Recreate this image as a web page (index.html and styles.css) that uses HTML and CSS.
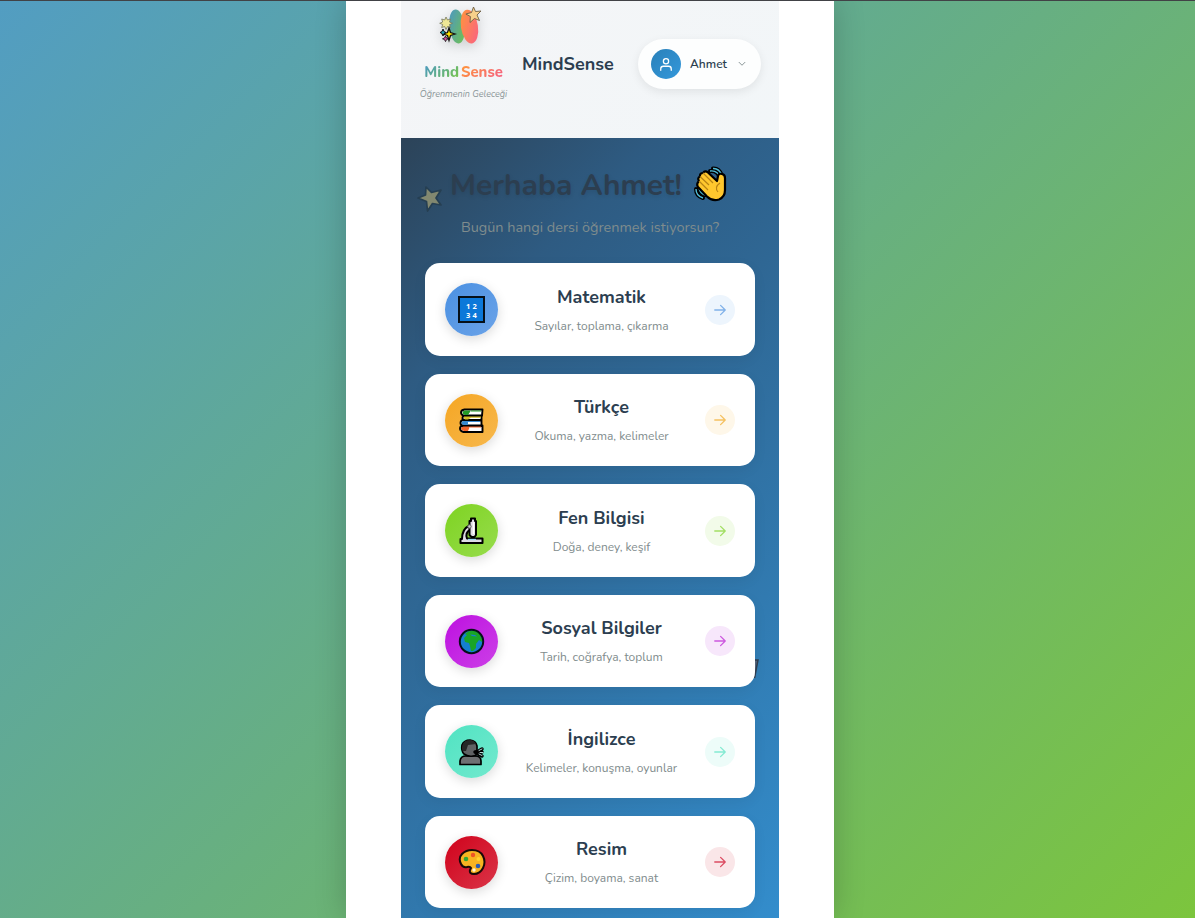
FILE: index.html
```html
<!DOCTYPE html>
<html lang="tr">
<head>
<meta charset="utf-8">
<title>MindSense</title>
<link rel="stylesheet" href="styles.css">
</head>
<body>
<svg class="defs" width="0" height="0">
  <defs>
    <symbol id="arrow" viewBox="0 0 24 24"><path d="M3 12h18M13 4l8 8-8 8"/></symbol>
  </defs>
</svg>
<div class="shell">
<div class="app">
  <header class="header">
    <div class="brand">
      <div class="mark">
        <svg width="56" height="46" viewBox="0 0 56 46">
          <defs>
            <linearGradient id="left" x1="0" y1="0" x2="1" y2="1"><stop offset="0" stop-color="#4b96c8"/><stop offset="1" stop-color="#72c44a"/></linearGradient>
            <linearGradient id="right" x1="0" y1="0" x2="1" y2="1"><stop offset="0" stop-color="#ff9838"/><stop offset="1" stop-color="#f95e87"/></linearGradient>
          </defs>
          <ellipse cx="25" cy="25.500" rx="7.800" ry="17" fill="url(#left)" transform="rotate(-6 25 26)"/>
          <ellipse cx="37.500" cy="25.500" rx="8.500" ry="17" fill="url(#right)" transform="rotate(-9 38 26)"/>
          <path d="M14 16l1.500 3 3-1-1 3 3 1.300-3 1.200 1 3-3-1-1.500 3-1.300-3-3 1 1-3-3-1.200 3-1.300-1-3 3 1z" fill="#eee795" stroke="#74765d" stroke-width=".8"/>
          <path d="M17 27l1.500 4.500 4.500 1.500-4.500 1.500-1.500 5-1.500-5-4.500-1.500 4.500-1.500z" fill="#ffe500" stroke="#111" stroke-width="1.300"/>
          <path d="M11 28l1 2.500 2 1-2 1-1 2.500-1-2.500-2-1 2-1z" fill="#24a7b8" stroke="#111"/>
          <path d="M13.500 35l1 2 2 .8-2 .8-1 2-1-2-2-.8 2-.8z" fill="#d94a9d" stroke="#111" stroke-width=".8"/>
          <path d="M41.500 6l2 4.500 5.500-.5-4 4 2.500 5.500-5-2-4.500 4 .4-6-4.500-2.500 5.600-1.500z" fill="#f7d08a" stroke="#6c5e43" stroke-width=".9"/>
        </svg>
      </div>
      <div class="wordmark"><span class="mind">Mind</span><span class="sense">Sense</span></div>
      <div class="tagline">Öğrenmenin Geleceği</div>
    </div>
    <h1 class="title">MindSense</h1>
    <div class="user">
      <span class="avatar"><svg width="14" height="15" viewBox="0 0 24 24"><circle cx="12" cy="6.500" r="4.500"/><path d="M3 22v-2.500a4.500 4.500 0 0 1 4.500-4.500h9a4.500 4.500 0 0 1 4.500 4.500V22"/></svg></span>
      <span class="name">Ahmet</span>
      <svg class="chevron" width="10" height="10" viewBox="0 0 24 24"><path d="M5 8l7 7 7-7"/></svg>
    </div>
  </header>
  <main class="main">
    <svg class="float-star" width="28" height="28" viewBox="0 0 28 28"><path d="M10 2l5.500 5.500L25 5l-5 8 5 7-8.500-1.500L11.500 26l-1-9.500L2 13l7.500-3z"/></svg>
    <svg class="float-flag" width="10" height="22" viewBox="0 0 10 22"><path d="M1 1h7L4.500 19"/></svg>
    <div class="greeting">
      <h2 class="hello">Merhaba Ahmet!</h2>
      <svg class="wave" width="34" height="36" viewBox="0 0 34 36">
        <path class="wave-outline" d="M16 4q8-1 10 7M19 1.500q6-.5 9 7M2 22q0 7 7 9M5 21q1 5 6 7"/>
        <path class="wave-line" d="M16 4q8-1 10 7M19 1.500q6-.5 9 7M2 22q0 7 7 9M5 21q1 5 6 7"/>
        <path d="M5 14q-2-3 1-4.500-.5-3.500 3-3.500 2-3 5-.5l9 8.500 1-5q.5-3 4-2 3 .5 3 4v12q0 7-6 9.500-7 2-12-3L4 20q-2-3 1-6z" fill="#ffc72e" stroke="#000" stroke-width="2.200" stroke-linejoin="round"/>
        <path d="M6 9.500l9 8.500M9 6l10 10M5 14l9 9M26 16q-6 4-2 9" fill="none" stroke="#b78315" stroke-width="1.200"/>
      </svg>
    </div>
    <p class="question">Bugün hangi dersi öğrenmek istiyorsun?</p>
    <div class="cards">
      <div class="card math">
        <span class="icon"><svg width="27" height="27" viewBox="0 0 27 27"><rect x="1" y="1" width="25" height="25" fill="#0c78d9" stroke="#061019" stroke-width="2"/><text class="digits" x="8" y="12.500">1</text><text class="digits" x="14.500" y="12.500">2</text><text class="digits" x="8" y="21.500">3</text><text class="digits" x="14.500" y="21.500">4</text></svg></span>
        <div class="text"><h3>Matematik</h3><p>Sayılar, toplama, çıkarma</p></div>
        <span class="go"><svg width="14" height="14"><use href="#arrow"/></svg></span>
      </div>
      <div class="card turkish">
        <span class="icon"><svg width="27" height="27" viewBox="0 0 27 27" stroke="#000" stroke-width="1.900" stroke-linejoin="round">
          <path d="M24.500 2.500H6.500Q3 3 3 5.500T6.500 9h17.500zM23.500 8.500H7q-2.500.5-2.500 2.500T7 13.500h16.500zM23.500 13H5Q2.500 13.500 2.500 16T5.500 19h18zM24.500 18.500H5q-3 .5-3 3t3.500 3.500h19z" fill="#fff"/>
          <path d="M13 3.500H7Q4.500 4 4.500 5.500T7 8h3zM12 3.500h11v1H12z" fill="#239b27" stroke="none"/><path d="M6 9.500h17v1.200H13L10 12.500H7q-2-1.500-1-3z" fill="#d5bd27" stroke="none"/><path d="M10 14H5.500q-2 .5-2 2T6 18h4zM10 14h12v1H10z" fill="#3989d0" stroke="none"/><path d="M12 19.500H5.500q-2.500.5-2.500 2T6 24h4zM12 19.500h11v1H11z" fill="#f2652d" stroke="none"/>
        </svg></span>
        <div class="text"><h3>Türkçe</h3><p>Okuma, yazma, kelimeler</p></div>
        <span class="go"><svg width="14" height="14"><use href="#arrow"/></svg></span>
      </div>
      <div class="card science">
        <span class="icon"><svg width="27" height="28" viewBox="0 0 27 28" stroke="#000" stroke-width="2" stroke-linejoin="round">
          <path d="M11.500 8.500Q4 12 4 22H2.500v4h22v-4.500H9q-2-6 3-8.500z" fill="#dedce5"/><path d="M13 1.500h4V4h1v14l-1.500 2h-3L11.500 18V4H13z" fill="#dedce5"/><path d="M10 22.500h8" stroke="#9bd9f5" stroke-width="1.300"/><circle cx="11.500" cy="9.500" r="1.700" fill="#ccc" stroke="#666" stroke-width="1"/><path d="M15.500 5v12" stroke="#fff" stroke-width="1.500"/>
        </svg></span>
        <div class="text"><h3>Fen Bilgisi</h3><p>Doğa, deney, keşif</p></div>
        <span class="go"><svg width="14" height="14"><use href="#arrow"/></svg></span>
      </div>
      <div class="card social">
        <span class="icon"><svg width="27" height="27" viewBox="0 0 27 27">
          <circle cx="13.500" cy="13.500" r="11.700" fill="#147fd0"/><path d="M8 5q3-3 10-2l4 3 2 5v3l-3-2-3 4 0 4-3 3h-2l-1-5-1-3-4-1-1-4 3-3-2-1z" fill="#19a526"/><path d="M12 6.500l5 .5 2 1.500-5-.5z" fill="#147fd0"/><circle cx="13.500" cy="13.500" r="11.700" fill="none" stroke="#061019" stroke-width="2"/>
        </svg></span>
        <div class="text"><h3>Sosyal Bilgiler</h3><p>Tarih, coğrafya, toplum</p></div>
        <span class="go"><svg width="14" height="14"><use href="#arrow"/></svg></span>
      </div>
      <div class="card english">
        <span class="icon"><svg width="27" height="28" viewBox="0 0 27 28" stroke="#000" stroke-width="1.700" stroke-linejoin="round" stroke-linecap="round">
          <path d="M2 26.500V23q.5-5 6-5h9q6 0 6 5v3.500z" fill="#6e7072"/><path d="M6 16Q3 13 4 7q2-5 8-5 6 .5 7 6v8q-1 2-4 2-5 1-9-2z" fill="#606264"/><path d="M4.500 13V7q1.500-5 7.500-5 4 0 6 4l-8 1-2 6z" fill="#262626" stroke="none"/><path d="M17 14l3-.5 4-2.500M18 14h6M18 15l6 3" fill="none" stroke="#000" stroke-width="3.500"/><path d="M21 12.500l3-1.500M22 14.500h3M21 16l3 1.500" stroke="#b7d8d5" stroke-width="1"/>
        </svg></span>
        <div class="text"><h3>İngilizce</h3><p>Kelimeler, konuşma, oyunlar</p></div>
        <span class="go"><svg width="14" height="14"><use href="#arrow"/></svg></span>
      </div>
      <div class="card art">
        <span class="icon"><svg width="28" height="28" viewBox="0 0 28 28">
          <path d="M14 2q8 0 11 6 3 6 0 12-3 6-9 6-5 0-4-4l1-2q-1-2-4-1-4 1-6-3-3-6 1-10 4-4 10-4z" fill="#f7b321" stroke="#190a08" stroke-width="2"/><circle cx="15" cy="7" r="2.200" fill="#ed5426"/><circle cx="8" cy="11" r="2.300" fill="#32a634"/><circle cx="20.500" cy="11" r="2" fill="#ffd22e"/><circle cx="20" cy="18" r="2.300" fill="#285cb5"/><circle cx="16" cy="22" r="1.700" fill="#fff4d9"/>
        </svg></span>
        <div class="text"><h3>Resim</h3><p>Çizim, boyama, sanat</p></div>
        <span class="go"><svg width="14" height="14"><use href="#arrow"/></svg></span>
      </div>
    </div>
  </main>
</div>
</div>
</body>
</html>
```
FILE: styles.css
```css
* { box-sizing: border-box; }
body {
  margin: 0;
  height: 918px;
  overflow: hidden;
  background: linear-gradient(135deg, #529dc2 0%, #67af82 50%, #7cc53d 100%);
  border-top: 1px solid #414246;
  font-family: Nunito, Lato, "Open Sans", sans-serif;
  color: #2c3e50;
}
h1, h2, h3, p { margin: 0; white-space: nowrap; }
.defs { position: absolute; }
.shell {
  width: 488px;
  height: 917px;
  margin-left: 346px;
  padding: 0 55px;
  background: #fff;
  box-shadow: 0 0 30px rgba(0, 0, 0, .2);
}
.app { width: 378px; height: 917px; overflow: hidden; }
.header {
  height: 137px;
  display: flex;
  align-items: flex-start;
  padding: 0 18px;
  background: linear-gradient(135deg, #f4f5f7, #f2f6f8);
}
.brand {
  width: 89px;
  display: flex;
  flex-direction: column;
  align-items: center;
}
.mark { height: 62px; padding-right: 8px; }
.mark svg { display: block; filter: drop-shadow(0 4px 6px rgba(0, 0, 0, .15)); }
.wordmark {
  display: flex;
  gap: 2px;
  font-size: 14.800px;
  line-height: 18px;
  font-weight: 800;
}
.mind, .sense { background-clip: text; -webkit-background-clip: text; color: transparent; }
.mind { background-image: linear-gradient(135deg, #4a97c8, #7bc843); }
.sense { background-image: linear-gradient(135deg, #ff9838, #f45e87); }
.tagline {
  margin-top: 6px;
  font-size: 9px;
  line-height: 15px;
  font-style: italic;
  color: #8b9597;
  white-space: nowrap;
}
.title {
  margin: 50px 0 0 14px;
  width: 92px;
  font-size: 18px;
  line-height: 27px;
  font-weight: 700;
}
.user {
  display: flex;
  align-items: center;
  width: 123px;
  height: 50px;
  margin: 38px 0 0 24px;
  padding: 0 14px 0 13px;
  flex: none;
  border-radius: 25px;
  background: #fdfefe;
  box-shadow: 0 3px 10px rgba(0, 0, 0, .08);
}
.avatar {
  display: grid;
  place-items: center;
  width: 30px;
  height: 30px;
  border-radius: 50%;
  background: linear-gradient(135deg, #2980b9, #3498db);
}
.avatar svg, .chevron, .go svg {
  fill: none;
  stroke: #fff;
  stroke-width: 2.200;
  stroke-linecap: round;
  stroke-linejoin: round;
}
.name { margin-left: 9px; font-size: 12px; line-height: 16px; font-weight: 600; }
.chevron { margin-left: auto; stroke: #7f8c8d; }
.main {
  position: relative;
  height: 780px;
  padding: 29px 24px 0;
  background: linear-gradient(135deg, #2c4358 0%, #2e5b82 22%, #2f6794 42%, #338dcc 100%);
}
.float-star { position: absolute; left: 15px; top: 47px; fill: #828870; stroke: #263f52; stroke-width: 1.700; stroke-linejoin: round; }
.float-flag { position: absolute; left: 349px; top: 521px; fill: #57677f; stroke: #303e50; stroke-width: 1.500; }
.greeting { display: flex; align-items: flex-start; height: 46px; padding-left: 25px; }
.hello {
  width: 244px;
  font-size: 30px;
  line-height: 38px;
  font-weight: 700;
  text-shadow: 0 2px 4px rgba(0, 0, 0, .1);
}
.wave { overflow: visible; }
.wave-outline { fill: none; stroke: #000; stroke-width: 4; stroke-linecap: round; }
.wave-line { fill: none; stroke: #50bbd7; stroke-width: 1.400; }
.question {
  height: 50px;
  font-size: 14.450px;
  line-height: 28px;
  color: #7f8c8d;
  text-align: center;
}
.cards { position: relative; display: grid; gap: 18px; }
.card {
  display: flex;
  align-items: center;
  height: 92.500px;
  padding: 1px 20px 0;
  border-radius: 15px;
  background: #fff;
  box-shadow: 0 4px 14px rgba(0, 0, 0, .06);
}
.icon {
  display: grid;
  place-items: center;
  width: 53px;
  height: 53px;
  border-radius: 50%;
  background: var(--fill);
  box-shadow: 0 3px 12px rgba(0, 0, 0, .15);
}
.digits { fill: #fff; font: bold 7.500px "Noto Sans", sans-serif; }
.text { flex: 1; padding-top: 1px; text-align: center; }
.text h3 { height: 31px; font-size: 18px; line-height: 26px; font-weight: 700; }
.text p { font-size: 12px; line-height: 22px; color: #7f8c8d; }
.go {
  display: grid;
  place-items: center;
  width: 30px;
  height: 30px;
  border-radius: 50%;
  background: var(--tint);
}
.go svg { stroke: var(--arrow); }
.math { --fill: linear-gradient(135deg, #4a90e2, #6ba3e8); --tint: #edf5fd; --arrow: #80b1e9; }
.turkish { --fill: linear-gradient(135deg, #f5a623, #f7b84d); --tint: #fef7e9; --arrow: #f5c160; }
.science { --fill: linear-gradient(135deg, #7ed321, #97dc4d); --tint: #f2fbe9; --arrow: #a2df63; }
.social { --fill: linear-gradient(135deg, #bd10e0, #cc40e7); --tint: #f7e7fb; --arrow: #cd58df; }
.english { --fill: linear-gradient(135deg, #50e3c2, #73e9ce); --tint: #edfcf9; --arrow: #84ead2; }
.art { --fill: linear-gradient(135deg, #d0021b, #da3548); --tint: #fae6e8; --arrow: #dc4c62; }
```
